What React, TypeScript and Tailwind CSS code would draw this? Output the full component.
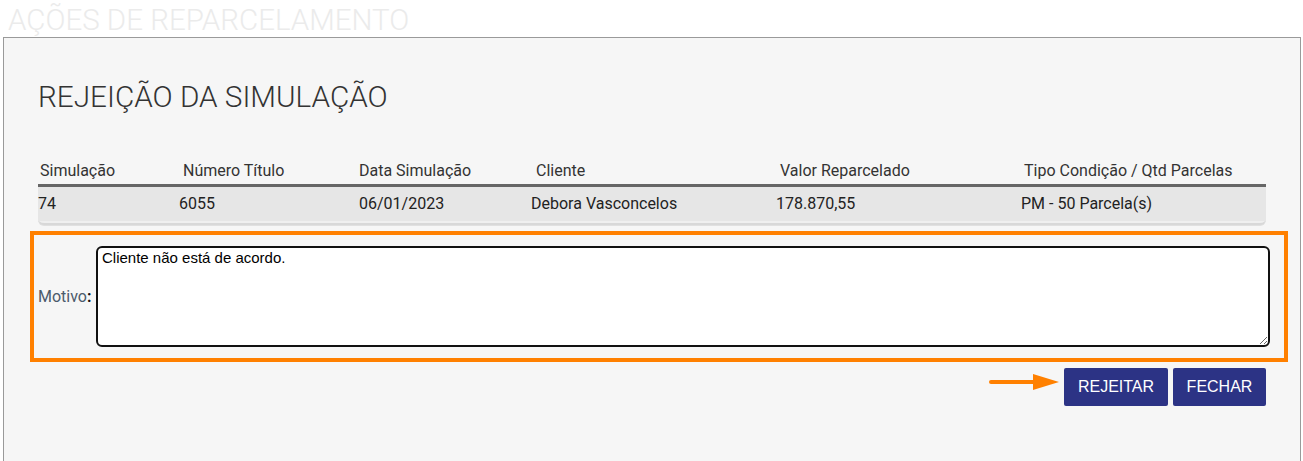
import { useState } from 'react'

const cols = [
  { head: 'Simulação', value: '74', hx: 'w-[145px] pl-[2px]', dx: 'w-[141px]' },
  { head: 'Número Título', value: '6055', hx: 'w-[176px]', dx: 'w-[180px]' },
  { head: 'Data Simulação', value: '06/01/2023', hx: 'w-[177px]', dx: 'w-[172px]' },
  { head: 'Cliente', value: 'Debora Vasconcelos', hx: 'w-[244px]', dx: 'w-[245px]' },
  { head: 'Valor Reparcelado', value: '178.870,55', hx: 'w-[244px]', dx: 'w-[245px]' },
  { head: 'Tipo Condição / Qtd Parcelas', value: 'PM - 50 Parcela(s)', hx: 'flex-1', dx: 'flex-1' },
]

export default function App() {
  const [motivo, setMotivo] = useState('Cliente não está de acordo.')

  return (
    <div className="h-[461px] w-[1303px] overflow-hidden bg-white font-['Roboto',sans-serif]">
      <div className="h-[37px] overflow-hidden pt-[4px]">
        <h1 className="ml-[8px] whitespace-nowrap text-[29.5px] font-light leading-[32px] text-[#ebebeb]">
          AÇÕES DE REPARCELAMENTO
        </h1>
      </div>

      <div className="ml-[3px] mr-[2px] h-[440px] border border-[#9a9a9a] bg-[#f6f6f6] pl-[26px] pr-[12px]">
        <h2 className="mt-[42px] pl-[8px] text-[29.7px] font-light leading-[34px] text-[#333]">
          REJEIÇÃO DA SIMULAÇÃO
        </h2>

        <div className="mt-[46px] ml-[8px] mr-[22px]">
          <div className="flex h-[24px] items-start text-[16px] leading-[22px] text-[#333]">
            {cols.map((c) => (
              <div key={c.head} className={c.hx}>{c.head}</div>
            ))}
          </div>
          <div className="rounded-b-[6px] border-b-2 border-[#d8d8d8] bg-[#efefef] shadow-[0_1px_0_#e0e0e0]">
            <div className="flex h-[37px] items-center border-t-[3px] border-[#666] bg-[#e6e6e6] text-[16px] text-[#222]">
              {cols.map((c) => (
                <div key={c.head} className={c.dx}>{c.value}</div>
              ))}
            </div>
            <div className="h-[2px]" />
          </div>
        </div>

        <div className="mt-[6px] flex h-[131px] items-center border-4 border-[#ff8000] pl-[4px] pr-[14px]">
          <label className="w-[58px] text-[16px] text-[#4b5b6b]">
            Motivo<span className="text-[16px] font-bold text-[#111]">:</span>
          </label>
          <textarea
            value={motivo}
            onChange={(e) => setMotivo(e.target.value)}
            className="h-[101px] flex-1 resize rounded-[6px] border-2 border-[#111] bg-white px-[4px] pt-[1px] font-['Liberation_Sans',sans-serif] text-[15px] leading-[17px] text-black outline-none"
          />
        </div>

        <div className="mt-[6px] flex items-center justify-end pr-[22px]">
          <svg width="72" height="18" viewBox="0 0 72 18" className="mr-[4px] mt-[-10px]">
            <line x1="3" y1="9" x2="48" y2="9" stroke="#ff8000" strokeWidth="4" strokeLinecap="round" />
            <polygon points="45,1 71,9 45,17" fill="#ff8000" />
          </svg>
          <button className="h-[38px] w-[104px] rounded-[2px] bg-[#2c3385] font-['Liberation_Sans',sans-serif] text-[16px] text-white">
            REJEITAR
          </button>
          <button className="ml-[5px] h-[38px] w-[93px] rounded-[2px] bg-[#2c3385] font-['Liberation_Sans',sans-serif] text-[16px] text-white">
            FECHAR
          </button>
        </div>
      </div>
    </div>
  )
}
